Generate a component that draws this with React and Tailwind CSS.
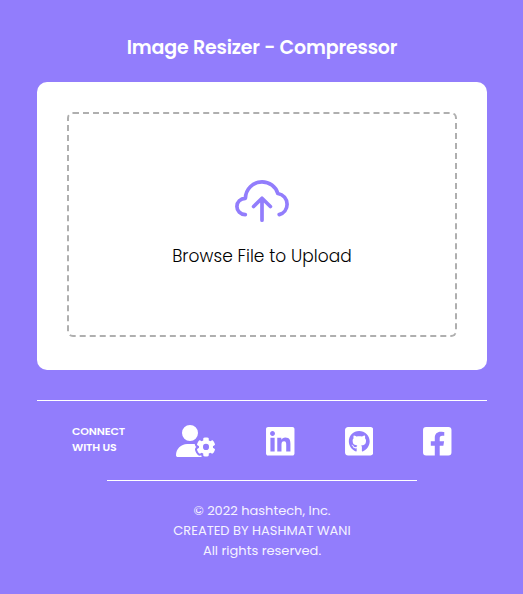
import { FaUserGear } from "react-icons/fa6";
import { FaLinkedin, FaGithubSquare, FaFacebookSquare } from "react-icons/fa";

function CloudUpload() {
  return (
    <svg width="55" height="43" viewBox="0 0 55 43" fill="none" stroke="#927dfc" strokeWidth="3.7" strokeLinecap="round" strokeLinejoin="round">
      <path d="M10.3 34.6C5.4 34.4 1.9 30.8 1.9 26.4C1.9 22 5.4 18.5 10.4 18.3C10.6 9.2 17.8 1.9 27 1.9C34.4 1.9 40.7 6.5 42.8 13.5C48.3 14.3 52.1 18.8 52.1 24.2C52.1 29.4 48.8 33.3 44.2 34.6" />
      <path d="M27 40.2V18.3M18.6 26.5L27 18.3L35.4 26.5" />
    </svg>
  );
}

export default function App() {
  return (
    <div className="flex h-[594px] w-full flex-col items-center bg-[#927dfc] pl-px font-['Poppins','Inter',sans-serif] text-white">
      <h1 className="mt-[33px] h-[49px] whitespace-nowrap text-[19px] leading-[30px] font-semibold tracking-[-0.16px]">
        Image Resizer - Compressor
      </h1>
      <main className="h-[288px] w-[450px] rounded-[10px] bg-white p-[30px]">
        <div className="flex h-[225px] flex-col items-center rounded-[6px] border-2 border-dashed border-[#afafaf] pt-[66px]">
          <CloudUpload />
          <p className="mt-[20px] whitespace-nowrap text-[17px] leading-[27px] font-light tracking-[0.06px] text-black">
            Browse File to Upload
          </p>
        </div>
      </main>
      <footer className="mt-[30px] flex w-[450px] flex-col items-center border-t border-white">
        <div className="flex h-[79px] w-full pt-6 pl-[35px]">
          <p className="-mt-0.5 w-[103.5px] text-[11px] leading-4 font-semibold tracking-[-0.12px] whitespace-nowrap">
            CONNECT
            <br />
            WITH US
          </p>
          <FaUserGear className="h-8 w-10 shrink-0" />
          <FaLinkedin className="ml-[50.5px] h-[32.5px] w-[28.5px] shrink-0" />
          <FaGithubSquare className="ml-[50px] h-[32.5px] w-[28.5px] shrink-0" />
          <FaFacebookSquare className="ml-[50px] h-[32.5px] w-[28.5px] shrink-0" />
        </div>
        <div className="w-[310px] border-t border-white" />
        <div className="mt-[20px] text-center text-[13px] leading-5 whitespace-nowrap text-[#f5f3ff]">
          <p>© 2022 hashtech, Inc.</p>
          <p>CREATED BY HASHMAT WANI</p>
          <p>All rights reserved.</p>
        </div>
      </footer>
    </div>
  );
}
